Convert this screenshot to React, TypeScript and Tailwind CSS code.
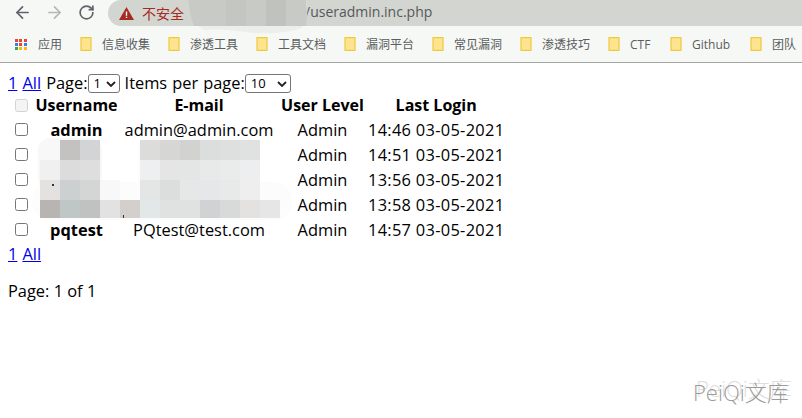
import { ArrowLeft, ArrowRight, RotateCw } from "lucide-react";

const bookmarks = [
  { label: "信息收集", w: "w-[88px]" },
  { label: "渗透工具", w: "w-[88px]" },
  { label: "工具文档", w: "w-[88px]" },
  { label: "漏洞平台", w: "w-[88px]" },
  { label: "常见漏洞", w: "w-[88px]" },
  { label: "渗透技巧", w: "w-[88px]" },
  { label: "CTF", w: "w-[62px]" },
  { label: "Github", w: "w-[80px]" },
  { label: "团队", w: "w-[52px]" },
];

const rows = [
  { name: "admin", email: "admin@admin.com", login: "14:46 03-05-2021" },
  { name: "", email: "", login: "14:51 03-05-2021" },
  { name: "", email: "", login: "13:56 03-05-2021" },
  { name: "", email: "", login: "13:58 03-05-2021" },
  { name: "pqtest", email: "PQtest@test.com", login: "14:57 03-05-2021" },
];

// mosaic over the redacted rows: [x, y, w, h, colour], relative to the first cell at 40,140
const mosaic: [number, number, number, number, string][] = [
  [20, 0, 20, 20, "#c4c2c0"],
  [40, 0, 20, 20, "#d2d4d6"],
  [100, 0, 20, 20, "#dcdddb"],
  [120, 0, 20, 20, "#d6d7d5"],
  [140, 0, 20, 20, "#d2d3d1"],
  [160, 0, 20, 20, "#dcdedd"],
  [180, 0, 20, 20, "#dee0df"],
  [200, 0, 20, 20, "#e0e2e1"],
  [0, 20, 20, 20, "#f0f0f0"],
  [20, 20, 20, 20, "#dcdcdc"],
  [40, 20, 20, 20, "#dedede"],
  [100, 20, 20, 20, "#eeeff0"],
  [120, 20, 20, 20, "#e4e5e4"],
  [140, 20, 20, 20, "#e4e6e5"],
  [160, 20, 20, 20, "#e8eaea"],
  [180, 20, 20, 20, "#eaecec"],
  [200, 20, 20, 20, "#eceef0"],
  [0, 40, 20, 20, "#e4e2e0"],
  [20, 40, 20, 20, "#ccd0d0"],
  [40, 40, 20, 20, "#d4d6d6"],
  [60, 40, 20, 20, "#f8f8f8"],
  [100, 40, 20, 20, "#e4e6e6"],
  [120, 40, 20, 20, "#dcdede"],
  [140, 40, 20, 20, "#e6e8e8"],
  [160, 40, 20, 20, "#e4e8e8"],
  [180, 40, 20, 20, "#e8eaea"],
  [200, 40, 20, 20, "#eeeeee"],
  [0, 60, 20, 18, "#b8b4b2"],
  [20, 60, 20, 18, "#bec6c6"],
  [40, 60, 20, 18, "#c0c2c2"],
  [60, 60, 20, 18, "#e2e2e2"],
  [80, 60, 20, 18, "#d2cfcd"],
  [100, 60, 20, 18, "#e2e8e8"],
  [120, 60, 40, 18, "#e0e2e2"],
  [160, 60, 20, 18, "#d0d2d4"],
  [180, 60, 20, 18, "#d8dada"],
  [200, 60, 20, 18, "#e4e2e0"],
  [220, 60, 20, 18, "#e4e6e8"],
];

function Folder() {
  return (
    <svg width="12" height="14" viewBox="0 0 12 14" className="shrink-0">
      <path d="M1 .7h10v12.6H1z" fill="#fee48f" stroke="#f0c93f" strokeWidth="1.2" />
    </svg>
  );
}

function AppsIcon() {
  const dots = ["#e8453c", "#e8453c", "#e8453c", "#3b7de8", "#e8453c", "#3b7de8", "#34a853", "#fbbc05", "#fbbc05"];
  return (
    <div className="grid w-[12px] grid-cols-3 gap-px">
      {dots.map((c, i) => (
        <span key={i} className="h-[3px] w-[3px]" style={{ backgroundColor: c }} />
      ))}
    </div>
  );
}

function Check({ disabled = false }: { disabled?: boolean }) {
  return (
    <span
      className={
        disabled
          ? "block h-[13px] w-[13px] rounded-[2.5px] border border-[#d4d4d4] bg-[#f4f4f4]"
          : "block h-[13px] w-[13px] rounded-[2.5px] border border-[#767676] bg-white"
      }
    />
  );
}

function Select({ value, width }: { value: string; width: string }) {
  return (
    <span
      className={`inline-flex h-[19px] ${width} items-center justify-between rounded-[3px] border border-[#767676] bg-white pl-[5px] pr-[3px] align-[1px] text-[13px] leading-none`}
    >
      {value}
      <svg width="10" height="6" viewBox="0 0 10 6" fill="none" stroke="#222" strokeWidth="1.8">
        <path d="M1 1l4 4 4-4" />
      </svg>
    </span>
  );
}

export default function App() {
  return (
    <div className="relative h-[418px] w-[802px] overflow-hidden bg-white font-['Open_Sans','Noto_Sans_CJK_SC',sans-serif] text-black">
      {/* browser chrome */}
      <div className="h-[63px] border-b border-[#a3a5a3] bg-[#f6f8f6]">
        <div className="flex h-[26px] items-center">
          <div className="flex w-[108px] -translate-y-px items-center pl-[13px]">
            <ArrowLeft size={19} strokeWidth={2.2} className="text-[#5f6368]" />
            <ArrowRight size={19} strokeWidth={2.2} className="ml-[13px] text-[#b6b8b8]" />
            <RotateCw size={17} strokeWidth={2.4} className="ml-[14px] text-[#5f6368]" />
          </div>
          <div className="relative flex h-[26px] flex-1 items-center rounded-l-[13px] bg-[#d2d5d0] pl-[11px]">
            <svg width="15" height="13" viewBox="0 0 15 13">
              <path d="M7.5 0L15 13H0z" fill="#a52a20" />
              <path d="M6.8 4.5h1.4v4.2H6.8zM6.8 9.7h1.4v1.4H6.8z" fill="#fff" />
            </svg>
            <span className="ml-[8px] text-[14px] text-[#a52a20]">不安全</span>
            <span className="absolute left-[197px] top-[2px] text-[14px] leading-[20px] text-[#55595a]">/useradmin.inc.php</span>
            <svg width="125" height="36" viewBox="0 0 125 36" className="absolute left-[78px] top-0">
              <path d="M2 0h118q4 16-4 28-20 7-50 5-30-5-48-3Q5 24 2 0z" fill="#eceeec" />
              <path d="M2 0h118q2 14 0 26H8Q4 16 2 0z" fill="#c8cac6" />
              <rect x="40" y="0" width="20" height="26" fill="#c4c6c2" />
              <rect x="80" y="0" width="20" height="26" fill="#c0c2be" />
            </svg>
          </div>
        </div>
        <div className="flex h-[36px] items-center pl-[15px] text-[12px] text-[#5a5d60]">
          <div className="flex w-[65px] items-center gap-[11px]">
            <AppsIcon />
            <span className="pt-px">应用</span>
          </div>
          {bookmarks.map((b) => (
            <div key={b.label} className={`flex ${b.w} items-center gap-[10px]`}>
              <Folder />
              <span className="whitespace-nowrap pt-px">{b.label}</span>
            </div>
          ))}
        </div>
      </div>

      {/* page */}
      <div className="px-[8px] pt-[9px] text-[16.4px] leading-[22px]">
        <div className="h-[22px] whitespace-nowrap [word-spacing:0.8px]">
          <a className="text-[#0000ee] underline">1</a> <a className="text-[#0000ee] underline">All</a> Page:
          <Select value="1" width="w-[32px]" /> Items per page:
          <Select value="10" width="w-[46px]" />
        </div>
        <table className="mt-[-1px] border-separate border-spacing-[2px] text-center">
          <thead>
            <tr className="h-[21px] text-[16px] leading-[21px]">
              <th className="w-[22px] pl-[5px] font-bold"><Check disabled /></th>
              <th className="w-[85px] font-bold">Username</th>
              <th className="w-[156px] font-bold">E-mail</th>
              <th className="w-[87px] font-bold">User Level</th>
              <th className="w-[136px] font-bold">Last Login</th>
            </tr>
          </thead>
          <tbody>
            {rows.map((r) => (
              <tr key={r.login} className="h-[23px]">
                <td className="pl-[5px]"><Check /></td>
                <td className="font-bold">{r.name}</td>
                <td>{r.email}</td>
                <td>Admin</td>
                <td className="whitespace-nowrap tracking-[0.3px]">{r.login}</td>
              </tr>
            ))}
          </tbody>
        </table>
        <div className="h-[22px] [word-spacing:0.8px]">
          <a className="text-[#0000ee] underline">1</a> <a className="text-[#0000ee] underline">All</a>
        </div>
        <div className="mt-[15px]">Page: 1 of 1</div>
      </div>

      {/* redaction mosaic */}
      <svg width="262" height="86" viewBox="0 0 262 86" className="absolute left-[32px] top-[136px]">
        <rect x="6" y="2" width="64" height="52" rx="12" fill="#f8f8f8" />
        <rect x="106" y="1" width="122" height="70" rx="12" fill="#fcfcfc" />
        <rect x="0" y="46" width="260" height="38" rx="18" fill="#fcfcfc" />
        <g transform="translate(8 4)">
          {mosaic.map(([x, y, w, h, c], i) => (
            <rect key={i} x={x} y={y} width={w} height={h} fill={c} />
          ))}
        </g>
        <rect x="20" y="48" width="2" height="2" fill="#333" />
        <rect x="91" y="79" width="1" height="3" fill="#333" />
      </svg>

      {/* watermark */}
      <div className="absolute left-[693px] top-[381px] text-[22px] font-light leading-none text-[#9b9b9b] [text-shadow:3px_-4px_0_#dedede]">PeiQi文库</div>
    </div>
  );
}
